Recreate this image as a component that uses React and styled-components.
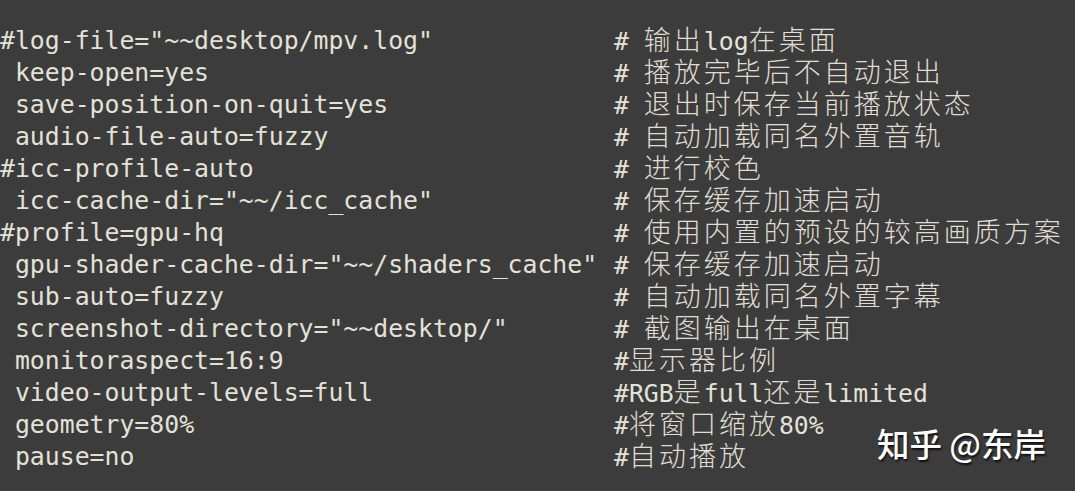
import React from "react";
import styled, { createGlobalStyle } from "styled-components";

const Global = createGlobalStyle`
  html, body { margin: 0; padding: 0; background: #3c3c3c; }
  body { width: 1075px; height: 491px; overflow: hidden; }
`;

const Editor = styled.div`
  position: relative;
  width: 1075px;
  height: 491px;
  box-sizing: border-box;
  padding-top: 25px;
  background: #3c3c3c;
  color: #e4e2d8;
  font-family: "DejaVu Sans Mono", "Liberation Mono", monospace;
  font-size: 24.8px;
`;

const Row = styled.div`
  display: grid;
  grid-template-columns: 614px 1fr;
  height: 32px;
  line-height: 32px;
  white-space: pre;
`;

const Code = styled.span`
  overflow: visible;
`;

const Comment = styled.span``;

const Cjk = styled.span`
  font-family: "Noto Sans CJK SC", sans-serif;
  font-weight: 300;
  font-size: 27px;
  letter-spacing: 3px;
  line-height: 1;
  color: #e0ded4;
`;

const Watermark = styled.div`
  position: absolute;
  left: 877px;
  top: 421px;
  font-family: "Noto Sans CJK SC", sans-serif;
  font-weight: 500;
  font-size: 32.5px;
  line-height: 44px;
  color: #ffffff;
  white-space: pre;
  text-shadow: 1px 2px 2px rgba(0, 0, 0, 0.75);
`;

const lines = [
  ['#log-file="~~desktop/mpv.log"', "# 输出log在桌面"],
  [" keep-open=yes", "# 播放完毕后不自动退出"],
  [" save-position-on-quit=yes", "# 退出时保存当前播放状态"],
  [" audio-file-auto=fuzzy", "# 自动加载同名外置音轨"],
  ["#icc-profile-auto", "# 进行校色"],
  [' icc-cache-dir="~~/icc_cache"', "# 保存缓存加速启动"],
  ["#profile=gpu-hq", "# 使用内置的预设的较高画质方案"],
  [' gpu-shader-cache-dir="~~/shaders_cache"', "# 保存缓存加速启动"],
  [" sub-auto=fuzzy", "# 自动加载同名外置字幕"],
  [' screenshot-directory="~~desktop/"', "# 截图输出在桌面"],
  [" monitoraspect=16:9", "#显示器比例"],
  [" video-output-levels=full", "#RGB是full还是limited"],
  [" geometry=80%", "#将窗口缩放80%"],
  [" pause=no", "#自动播放"],
];

function renderComment(text) {
  const parts = text.split(/([\u3000-\u9fff\uff00-\uffef]+)/);
  return parts.map((p, i) =>
    /[\u3000-\u9fff\uff00-\uffef]/.test(p) ? <Cjk key={i}>{p}</Cjk> : p
  );
}

export default function App() {
  return (
    <>
      <Global />
      <Editor>
        {lines.map(([code, comment], i) => (
          <Row key={i}>
            <Code>{code}</Code>
            <Comment>{renderComment(comment)}</Comment>
          </Row>
        ))}
        <Watermark>知乎 @东岸</Watermark>
      </Editor>
    </>
  );
}
